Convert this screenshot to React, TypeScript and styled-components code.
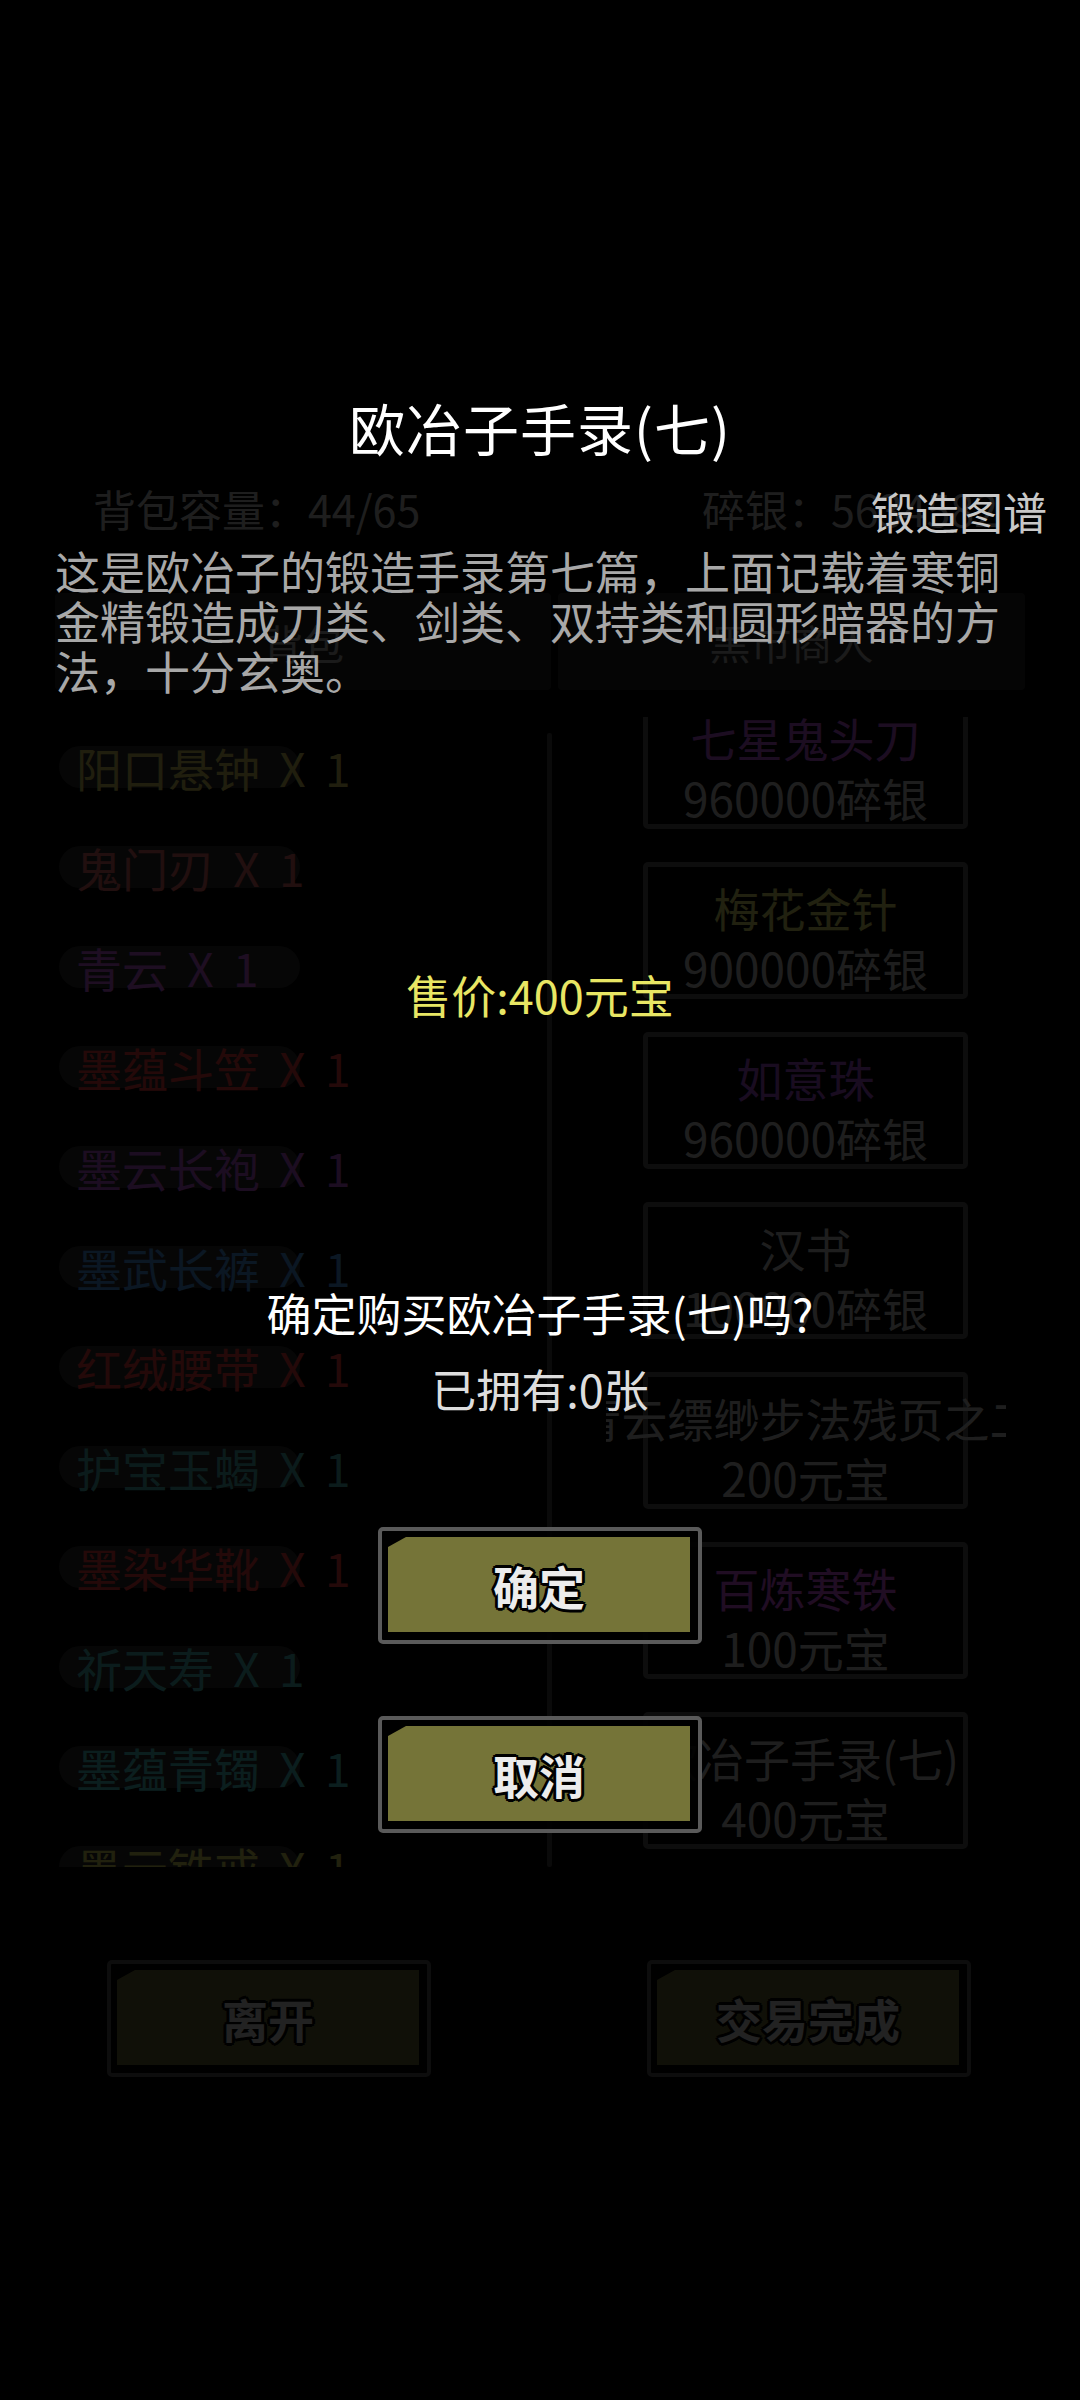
import styled, { createGlobalStyle } from "styled-components"

const GlobalStyle = createGlobalStyle`
    html, body {
        margin: 0;
        padding: 0;
        background: #000;
    }
    body {
        font-family: "Noto Sans CJK SC", "Noto Sans", sans-serif;
    }
`

const Screen = styled.div`
    position: relative;
    width: 1080px;
    height: 2400px;
    overflow: hidden;
    background: #000;
`

/* ---------- shop screen underneath ---------- */

const Shop = styled.div`
    display: flex;
    flex-direction: column;
    padding-top: 478px;
`

const StatusRow = styled.div`
    display: grid;
    grid-template-columns: 609px 1fr;
    padding-left: 93px;
    font-size: 43px;
    line-height: 60px;
    color: #d4d4d4;
    white-space: nowrap;
`

const Tabs = styled.div`
    display: flex;
    gap: 7px;
    margin: 55px 0 0 55px;
`

const Tab = styled.div<{ $width: number }>`
    width: ${({ $width }) => $width}px;
    height: 97px;
    display: flex;
    align-items: center;
    justify-content: center;
    background: #262626;
    border-radius: 4px;
    font-size: 41px;
    color: #bbbbbb;
`

const Body = styled.div`
    display: grid;
    grid-template-columns: 492px 5px 1fr;
    height: 1150px;
    margin: 27px 0 0 55px;
`

const BagList = styled.div`
    overflow: hidden;
    padding-left: 4px;
`

const BagItem = styled.div<{ $color: string }>`
    position: relative;
    height: 100px;
    display: flex;
    align-items: center;
    padding-left: 17px;
    font-size: 46px;
    word-spacing: 9px;
    color: ${({ $color }) => $color};
    white-space: nowrap;

    &::before {
        content: "";
        position: absolute;
        left: 0;
        top: 29px;
        width: 241px;
        height: 42px;
        border-radius: 21px;
        background: #2c2c2c;
    }

    span {
        position: relative;
    }
`

const Divider = styled.div`
    margin-top: 16px;
    background: #4a4a4a;
    border-radius: 2px;
`

const ShopList = styled.div`
    overflow: hidden;
`

const ShopScroll = styled.div`
    display: flex;
    flex-direction: column;
    gap: 33px;
    margin-top: -25px;
    padding-left: 91px;
`

const Card = styled.div`
    width: 325px;
    height: 137px;
    box-sizing: border-box;
    border: 5px solid #5a5a5a;
    border-radius: 5px;
    padding-top: 10px;
    font-size: 46px;
    line-height: 60px;
    white-space: nowrap;
`

const CardName = styled.div<{ $color: string }>`
    display: flex;
    justify-content: center;
    width: 400px;
    margin: 0 -42.5px;
    overflow: hidden;
    color: ${({ $color }) => $color};
`

const CardPrice = styled.div`
    text-align: center;
    color: #d4d4d4;
`

const FooterRow = styled.div`
    display: flex;
    gap: 216px;
    margin-top: 93px;
    padding-left: 107px;
`

/* ---------- buttons ---------- */

const ButtonFrame = styled.div`
    width: 324px;
    height: 117px;
    box-sizing: border-box;
    border: 4px solid #5a5a5a;
    border-radius: 5px;
    padding: 6px 8px 8px 6px;
    background: rgba(0, 0, 0, 0.9);
`

const ButtonFace = styled.div`
    height: 100%;
    display: flex;
    align-items: center;
    justify-content: center;
    background: rgba(122, 121, 58, 0.96);
    clip-path: polygon(0 10px, 18px 0, 100% 0, 100% 100%, 0 100%);
    font-size: 46px;
    font-weight: 700;
    color: #ececec;
    text-shadow:
        -3px 0 #000, 3px 0 #000, 0 -3px #000, 0 3px #000,
        -2px -2px #000, 2px 2px #000, -2px 2px #000, 2px -2px #000;
`

function GameButton({ label }: { label: string }) {
    return (
        <ButtonFrame>
            <ButtonFace>{label}</ButtonFace>
        </ButtonFrame>
    )
}

/* ---------- purchase dialog ---------- */

const Overlay = styled.div`
    position: absolute;
    inset: 0;
    display: flex;
    flex-direction: column;
    align-items: center;
    padding-top: 397px;
    background: rgba(0, 0, 0, 0.86);
`

const Title = styled.div`
    font-size: 56px;
    line-height: 60px;
    color: #ffffff;
    letter-spacing: 1px;
`

const ForgeLink = styled.div`
    align-self: stretch;
    margin-top: 29px;
    padding-right: 33px;
    text-align: right;
    font-size: 44px;
    line-height: 50px;
    color: #c8c8c8;
`

const Description = styled.div`
    align-self: flex-start;
    width: 960px;
    margin: 10px 0 0 55px;
    font-size: 45px;
    line-height: 50px;
    color: #a8a8a8;
`

const DialogLine = styled.div<{ $color: string; $gap: number }>`
    margin-top: ${({ $gap }) => $gap}px;
    font-size: 45px;
    line-height: 60px;
    color: ${({ $color }) => $color};
    white-space: nowrap;
`

const DialogButtons = styled.div`
    display: flex;
    flex-direction: column;
    gap: 72px;
    margin-top: 108px;
`

const bagItems = [
    { name: "阳口悬钟", color: "#ded364" },
    { name: "鬼门刃", color: "#e86a6a" },
    { name: "青云", color: "#d064f0" },
    { name: "墨蕴斗笠", color: "#ff4343" },
    { name: "墨云长袍", color: "#c85fe9" },
    { name: "墨武长裤", color: "#53a1f4" },
    { name: "红绒腰带", color: "#ff4343" },
    { name: "护宝玉蝎", color: "#53bdbd" },
    { name: "墨染华靴", color: "#ff4343" },
    { name: "祈天寿", color: "#50c8c8" },
    { name: "墨蕴青镯", color: "#53d4d4" },
    { name: "墨云铁戒", color: "#e8e864" },
]

const shopItems = [
    { name: "七星鬼头刀", price: "960000碎银", color: "#c85ae9" },
    { name: "梅花金针", price: "900000碎银", color: "#e8e870" },
    { name: "如意珠", price: "960000碎银", color: "#b058e0" },
    { name: "汉书", price: "100000碎银", color: "#d4d4d4" },
    { name: "青云缥缈步法残页之二", price: "200元宝", color: "#d4d4d4" },
    { name: "百炼寒铁", price: "100元宝", color: "#e05af8" },
    { name: "欧冶子手录(七)", price: "400元宝", color: "#d4d4d4" },
]

export default function App() {
    return (
        <Screen>
            <GlobalStyle />
            <Shop>
                <StatusRow>
                    <div>背包容量：44/65</div>
                    <div>碎银：5634582</div>
                </StatusRow>
                <Tabs>
                    <Tab $width={496}>背包</Tab>
                    <Tab $width={467}>黑市商人</Tab>
                </Tabs>
                <Body>
                    <BagList>
                        {bagItems.map((item) => (
                            <BagItem key={item.name} $color={item.color}>
                                <span>{item.name} X 1</span>
                            </BagItem>
                        ))}
                    </BagList>
                    <Divider />
                    <ShopList>
                        <ShopScroll>
                            {shopItems.map((item) => (
                                <Card key={item.name}>
                                    <CardName $color={item.color}>{item.name}</CardName>
                                    <CardPrice>{item.price}</CardPrice>
                                </Card>
                            ))}
                        </ShopScroll>
                    </ShopList>
                </Body>
                <FooterRow>
                    <GameButton label="离开" />
                    <GameButton label="交易完成" />
                </FooterRow>
            </Shop>

            <Overlay>
                <Title>欧冶子手录(七)</Title>
                <ForgeLink>锻造图谱</ForgeLink>
                <Description>
                    这是欧冶子的锻造手录第七篇，上面记载着寒铜金精锻造成刀类、剑类、双持类和圆形暗器的方法，十分玄奥。
                </Description>
                <DialogLine $color="#e8e664" $gap={269}>售价:400元宝</DialogLine>
                <DialogLine $color="#ffffff" $gap={258}>确定购买欧冶子手录(七)吗?</DialogLine>
                <DialogLine $color="#dddddd" $gap={16}>已拥有:0张</DialogLine>
                <DialogButtons>
                    <GameButton label="确定" />
                    <GameButton label="取消" />
                </DialogButtons>
            </Overlay>
        </Screen>
    )
}
